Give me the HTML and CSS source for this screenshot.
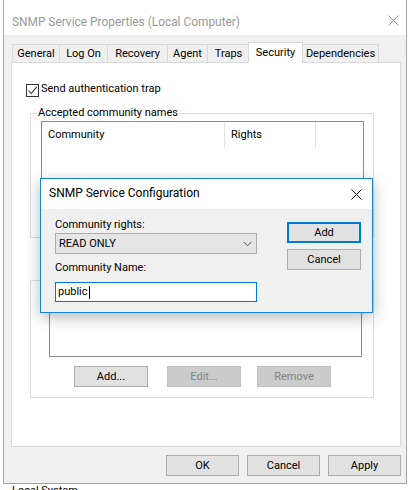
FILE: index.html
```html
<!DOCTYPE html>
<html>
<head>
<meta charset="utf-8">
<link rel="stylesheet" href="styles.css">
</head>
<body>
<div class="window">
  <div class="titlebar">
    <span class="title">SNMP Service Properties (Local Computer)</span>
    <svg class="close" width="11" height="11" viewBox="0 0 11 11"><path d="M0.5 0.5 L10.5 10.5 M10.5 0.5 L0.5 10.5" stroke="#999" stroke-width="1" fill="none"/></svg>
  </div>
  <div class="content">
    <div class="tabs">
      <div class="tab t-general">General</div>
      <div class="tab t-logon">Log On</div>
      <div class="tab t-recovery">Recovery</div>
      <div class="tab t-agent">Agent</div>
      <div class="tab t-traps">Traps</div>
      <div class="tab t-security selected">Security</div>
      <div class="tab t-deps">Dependencies</div>
    </div>
    <div class="panel">
      <div class="check-row">
        <span class="checkbox"><svg width="11" height="11" viewBox="0 0 11 11"><path d="M1.5 5.5 L4.2 8.5 L9.8 1.8" stroke="#333" stroke-width="1.1" fill="none"/></svg></span>
        <span class="check-label">Send authentication trap</span>
      </div>
      <div class="group group-a">
        <span class="group-label">Accepted community names</span>
        <div class="list list-a">
          <div class="list-head">
            <div class="col col-community">Community</div>
            <div class="col col-rights">Rights</div>
            <div class="col col-rest"></div>
          </div>
        </div>
      </div>
      <div class="group group-b">
        <div class="list list-b"></div>
        <div class="btn-row">
          <div class="btn btn-add">Add...</div>
          <div class="btn btn-edit disabled">Edit...</div>
          <div class="btn btn-remove disabled">Remove</div>
        </div>
      </div>
    </div>
    <div class="footer">
      <div class="btn fbtn">OK</div>
      <div class="btn fbtn">Cancel</div>
      <div class="btn fbtn">Apply</div>
    </div>
  </div>
</div>
<div class="below">Local System</div>

<div class="dialog">
  <div class="dlg-title">
    <span class="dlg-title-text">SNMP Service Configuration</span>
    <svg class="dlg-close" width="11" height="11" viewBox="0 0 11 11"><path d="M0.5 0.5 L10.5 10.5 M10.5 0.5 L0.5 10.5" stroke="#111" stroke-width="1" fill="none"/></svg>
  </div>
  <div class="dlg-body">
    <div class="dlg-left">
      <div class="dlg-label">Community rights:</div>
      <div class="select">
        <span>READ ONLY</span>
        <svg class="chev" width="9" height="6" viewBox="0 0 9 6"><path d="M0.5 0.8 L4.5 4.8 L8.5 0.8" stroke="#555" stroke-width="1" fill="none"/></svg>
      </div>
      <div class="dlg-label label-name">Community Name:</div>
      <div class="input"><span>public</span><span class="caret"></span></div>
    </div>
    <div class="dlg-right">
      <div class="btn dbtn default">Add</div>
      <div class="btn dbtn dbtn-cancel">Cancel</div>
    </div>
  </div>
</div>
</body>
</html>
```
FILE: styles.css
```css
html, body {
  margin: 0;
  padding: 0;
}
body {
  position: relative;
  width: 411px;
  height: 490px;
  overflow: hidden;
  background: #fff;
  font-family: Roboto, "Liberation Sans", sans-serif;
  font-size: 11px;
  line-height: 14px;
  color: #000;
}

.window {
  margin-left: 3px;
  width: 404px;
  height: 484px;
  box-sizing: border-box;
  border: 1px solid #a3a3a3;
  border-top: none;
  background: #f0f0f0;
}

.titlebar {
  height: 35px;
  background: #fff;
  display: flex;
  align-items: flex-start;
  padding-left: 8px;
  box-sizing: border-box;
  padding-top: 14px;
}
.title {
  font-size: 11.9px;
  line-height: 16px;
  color: #999;
}
.close {
  margin-left: auto;
  margin-right: 7px;
  margin-top: 1px;
}

.content {
  padding: 7px 5px 0 7px;
}

.tabs {
  display: flex;
  align-items: flex-end;
  height: 20px;
  padding-left: 1px;
}
.tab {
  box-sizing: border-box;
  height: 18px;
  border: 1px solid #d9d9d9;
  border-bottom: none;
  margin-left: -1px;
  padding-top: 2px;
  text-align: center;
  background: #f0f0f0;
}
.tab:first-child { margin-left: 0; }
.t-general { width: 48px; }
.t-logon { width: 49px; }
.t-recovery { width: 61px; }
.t-agent { width: 41px; }
.t-traps { width: 43px; }
.t-security { width: 55px; margin-left: -2px; }
.t-deps { width: 77px; }
.tab.selected {
  position: relative;
  z-index: 1;
  height: 21px;
  margin-bottom: -1px;
  padding-top: 3px;
  background: #fff;
}

.panel {
  box-sizing: border-box;
  height: 385px;
  width: 390px;
  border: 1px solid #d9d9d9;
  background: #fff;
  overflow: hidden;
}

.check-row {
  display: flex;
  align-items: flex-start;
  margin-top: 19px;
  margin-left: 14px;
  height: 14px;
}
.checkbox {
  box-sizing: border-box;
  width: 13px;
  height: 13px;
  margin-top: 2px;
  border: 1px solid #333;
  background: #fff;
  display: flex;
}
.check-label {
  margin-left: 2px;
}

.group {
  position: relative;
  box-sizing: border-box;
  margin-left: 18px;
  width: 344px;
  border: 1px solid #dcdcdc;
}
.group-a {
  margin-top: 17px;
  height: 125px;
}
.group-b {
  margin-top: 42px;
  height: 118px;
}
.group-label {
  position: absolute;
  top: -8px;
  left: 6px;
  padding: 0 1px;
  background: #fff;
}

.list {
  box-sizing: border-box;
  border: 1px solid #8c8c8c;
  background: #fff;
}
.list-a {
  margin-top: 7px;
  margin-left: 10px;
  width: 323px;
  height: 110px;
}
.list-b {
  margin-top: 5px;
  margin-left: 18px;
  width: 313px;
  height: 71px;
}
.list-head {
  display: flex;
  height: 26px;
}
.col {
  box-sizing: border-box;
  height: 26px;
  padding: 6px 0 0 6px;
  border-right: 1px solid #e5e5e5;
}
.col-community { width: 183px; }
.col-rights { width: 91px; }
.col-rest { flex: 1; border-right: none; }

.btn {
  box-sizing: border-box;
  display: flex;
  align-items: center;
  justify-content: center;
  height: 21px;
  border: 1px solid #adadad;
  background: #e1e1e1;
}
.btn.disabled {
  background: #cccccc;
  border-color: #bfbfbf;
  color: #838383;
}
.btn-row {
  display: flex;
  margin-top: 9px;
  margin-left: 43px;
}
.btn-row .btn { width: 74px; }
.btn-edit { margin-left: 19px; }
.btn-remove { margin-left: 16px; }

.footer {
  display: flex;
  justify-content: flex-end;
  gap: 8px;
  width: 390px;
  margin-top: 8px;
}
.fbtn { width: 73px; }

.below {
  margin-left: 12px;
  margin-top: 0;
}

/* overlay dialog */
.dialog {
  position: absolute;
  left: 40px;
  top: 178px;
  width: 333px;
  height: 135px;
  box-sizing: border-box;
  border: 1px solid #1883d7;
  background: #f0f0f0;
  box-shadow: 0 4px 14px rgba(0, 0, 0, 0.28);
  z-index: 5;
}
.dlg-title {
  height: 30px;
  box-sizing: border-box;
  background: #fff;
  display: flex;
  align-items: flex-start;
  padding: 6px 0 0 8px;
}
.dlg-title-text {
  font-size: 12px;
  line-height: 16px;
}
.dlg-close {
  margin-left: auto;
  margin-right: 10px;
  margin-top: 4px;
}
.dlg-body {
  display: flex;
  padding-left: 14px;
}
.dlg-left {
  width: 202px;
  padding-top: 9px;
}
.select {
  box-sizing: border-box;
  margin-top: 1px;
  height: 21px;
  border: 1px solid #adadad;
  background: #e5e5e5;
  display: flex;
  align-items: center;
  padding-left: 3px;
}
.chev {
  margin-left: auto;
  margin-right: 4px;
}
.label-name {
  margin-top: 7px;
}
.input {
  box-sizing: border-box;
  margin-top: 7px;
  height: 20px;
  border: 1px solid #0078d7;
  background: #fff;
  display: flex;
  align-items: center;
  padding-left: 2px;
}
.caret {
  width: 1px;
  height: 13px;
  background: #000;
  margin-left: 1px;
}
.dlg-right {
  margin-left: 30px;
  width: 74px;
  padding-top: 13px;
}
.dbtn { width: 74px; }
.dbtn.default {
  border: 2px solid #0078d7;
}
.dbtn-cancel {
  margin-top: 6px;
}
```
